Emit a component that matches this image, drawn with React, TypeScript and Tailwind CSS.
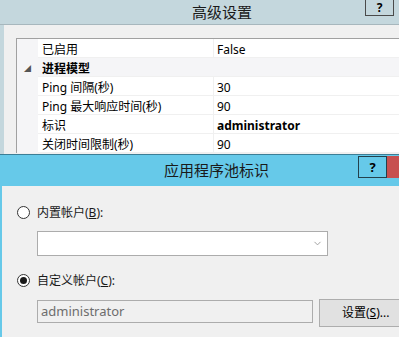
import { ChevronDown } from "lucide-react";

const font = { fontFamily: '"Noto Sans", "Noto Sans CJK SC", sans-serif' };

type Row = { label: string; value?: string; bold?: boolean; category?: boolean };

const rows: Row[] = [
  { label: "已启用", value: "False" },
  { label: "进程模型", category: true },
  { label: "Ping 间隔(秒)", value: "30" },
  { label: "Ping 最大响应时间(秒)", value: "90" },
  { label: "标识", value: "administrator", bold: true },
  { label: "关闭时间限制(秒)", value: "90" },
];

function Radio({ checked }: { checked?: boolean }) {
  return (
    <span className="flex h-[13px] w-[13px] items-center justify-center rounded-full border border-[#333] bg-white">
      {checked && <span className="h-[7px] w-[7px] rounded-full bg-[#1a1a1a]" />}
    </span>
  );
}

function PropertyGrid() {
  return (
    <div className="border-l border-t border-[#a0a0a0] bg-white">
      {rows.map((r) => (
        <div
          key={r.label}
          className={`flex h-[19px] items-center border-b border-[#f0f0f0] pt-[3px] text-[12px] leading-none text-black ${
            r.category ? "bg-[#f5f5f7]" : ""
          }`}
        >
          <div className="-mt-[3px] flex h-[19px] w-[21px] shrink-0 items-center justify-center bg-[#f5f5f7] pt-[3px]">
            {r.category && <span className="text-[7px] text-[#555]">◢</span>}
          </div>
          <div className={`w-[175px] shrink-0 pl-[4px] ${r.category ? "font-bold" : ""}`}>{r.label}</div>
          {!r.category && (
            <div
              className={`-mt-[3px] flex h-[19px] flex-1 items-center border-l border-[#f0f0f0] pl-[3px] pt-[3px] ${
                r.bold ? "font-bold" : ""
              }`}
            >
              {r.value}
            </div>
          )}
        </div>
      ))}
    </div>
  );
}

export default function App() {
  return (
    <div className="h-[337px] w-[399px] overflow-hidden bg-[#f0f0f0]" style={font}>
      {/* back window */}
      <div className="flex h-[154px] flex-col bg-[#c4d7dd]">
        <div className="relative flex h-[25px] shrink-0 items-center border-b border-[#a7b7bd]">
          <span className="pl-[192px] text-[15px] leading-none text-[#1a1a1a]">高级设置</span>
          <div className="absolute right-0 top-0 flex">
            <div className="flex h-[16px] w-[29px] items-start justify-center border-x border-b border-[#4a4a4a] pt-[1px] text-[12px] font-bold leading-[13px] text-black">
              ?
            </div>
            <div className="h-[16px] w-[5px]" />
          </div>
        </div>
        <div className="ml-[4px] flex-1 bg-[#f0f0f0] pl-[12px] pt-[13px]">
          <PropertyGrid />
        </div>
      </div>

      {/* front dialog */}
      <div className="flex h-[183px] flex-col border-t border-[#3c7e96] bg-[#66c9e9]">
        <div className="relative flex h-[31px] shrink-0 items-center">
          <span className="pl-[164px] text-[15px] leading-none text-[#1a1a1a]">应用程序池标识</span>
          <div className="absolute right-0 top-[1px] flex">
            <div className="flex h-[22px] w-[29px] items-center justify-center border border-[#24414c] text-[13px] font-bold leading-none text-black">
              ?
            </div>
            <div className="h-[22px] w-[12px] bg-[#c75050]" />
          </div>
        </div>
        <div className="ml-[2px] flex-1 bg-[#f0f0f0] pl-[15px] pt-[20px] text-[12px] leading-none text-[#1a1a1a]">
          <div className="flex items-center gap-[7px]">
            <Radio />
            <span>
              内置帐户(<span className="underline">B</span>):
            </span>
          </div>
          <div className="ml-[20px] mt-[12px] flex h-[25px] w-[291px] items-center justify-end border border-[#acacac] bg-white pr-[4px]">
            <ChevronDown className="h-[11px] w-[11px] text-[#9a9a9a]" strokeWidth={2} />
          </div>
          <div className="mt-[18px] flex items-center gap-[7px]">
            <Radio checked />
            <span>
              自定义帐户(<span className="underline">C</span>):
            </span>
          </div>
          <div className="mt-[12px] flex items-start">
            <div className="ml-[20px] mt-[1px] flex h-[23px] w-[276px] shrink-0 items-center border border-[#acacac] bg-[#f0f0f0] pl-[3px] text-[13px] text-[#6d6d6d]">
              administrator
            </div>
            <div className="ml-[6px] flex h-[28px] w-[90px] shrink-0 items-center border border-[#adadad] bg-[#e1e1e1] pl-[22px] text-[12px] text-black">
              设置(<span className="underline">S</span>)...
            </div>
          </div>
        </div>
      </div>
    </div>
  );
}
